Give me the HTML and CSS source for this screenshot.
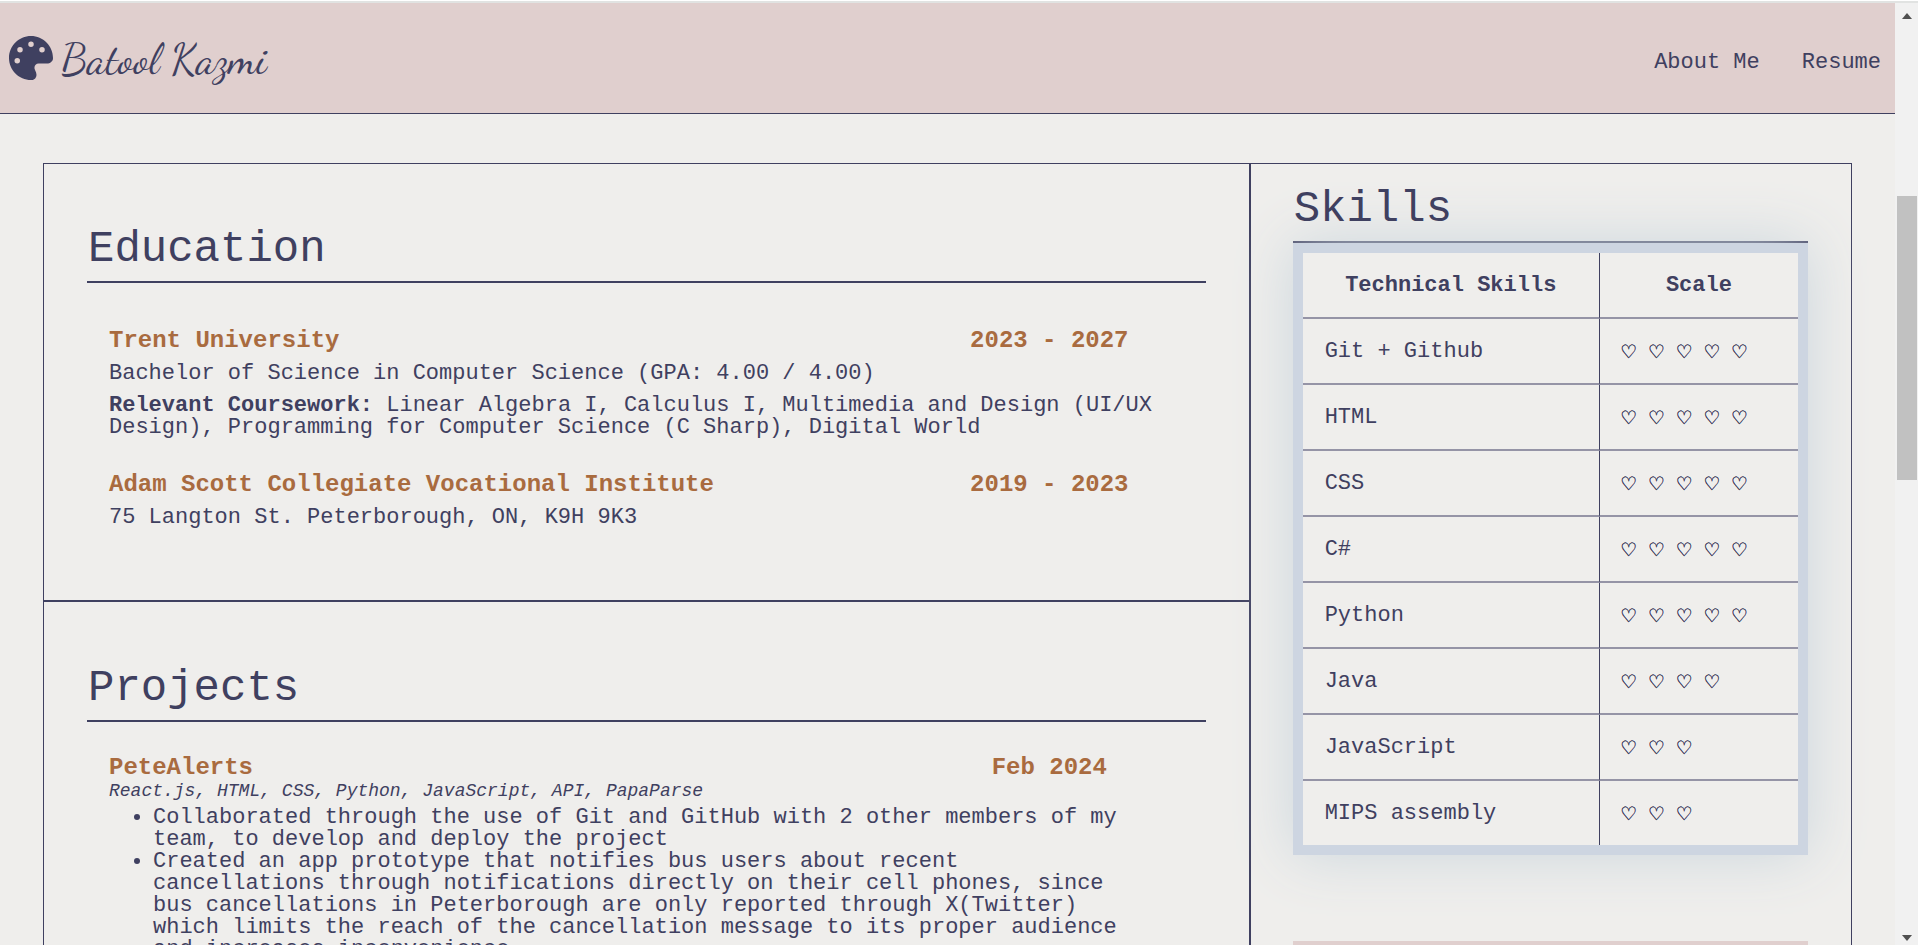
FILE: index.html
```html
<!DOCTYPE html>
<html lang="en">
<head>
<meta charset="utf-8">
<title>Batool Kazmi</title>
<link rel="stylesheet" href="styles.css">
</head>
<body>
<div class="window">
  <div class="page">
    <header class="site-header">
      <a class="brand" href="#">
        <svg class="brand-icon" viewBox="0 0 512 512" aria-hidden="true"><path d="M512 256c0 .9 0 1.800 0 2.700c-.4 36.500-33.600 61.300-70.100 61.300H344c-26.500 0-48 21.500-48 48c0 3.400 .4 6.700 1 9.900c2.100 10.200 6.500 20 10.800 29.900c6.100 13.800 12.100 27.500 12.100 42c0 31.800-21.600 60.700-53.400 62c-3.500 .1-7 .2-10.600 .2C114.600 512 0 397.400 0 256S114.600 0 256 0S512 114.600 512 256zM128 288a32 32 0 1 0 -64 0 32 32 0 1 0 64 0zm0-96a32 32 0 1 0 0-64 32 32 0 1 0 0 64zM288 96a32 32 0 1 0 -64 0 32 32 0 1 0 64 0zm96 96a32 32 0 1 0 0-64 32 32 0 1 0 0 64z"/></svg>
        <span class="brand-name">Batool Kazmi</span>
      </a>
      <nav class="site-nav">
        <a href="#about">About Me</a>
        <a href="#resume">Resume</a>
      </nav>
    </header>
    <main class="resume">
      <div class="main-column">
        <section class="panel">
          <h2 class="section-title">Education</h2>
          <div class="entries education">
            <article class="entry">
              <div class="entry-head"><h3>Trent University</h3><h3 class="date">2023 - 2027</h3></div>
              <p>Bachelor of Science in Computer Science (GPA: 4.00 / 4.00)</p>
              <p><strong>Relevant Coursework:</strong> Linear Algebra I, Calculus I, Multimedia and Design (UI/UX Design), Programming for Computer Science (C Sharp), Digital World</p>
            </article>
            <article class="entry">
              <div class="entry-head"><h3>Adam Scott Collegiate Vocational Institute</h3><h3 class="date">2019 - 2023</h3></div>
              <p>75 Langton St. Peterborough, ON, K9H 9K3</p>
            </article>
          </div>
        </section>
        <section class="panel">
          <h2 class="section-title">Projects</h2>
          <div class="entries projects">
            <article class="project">
              <div class="entry-head"><h3>PeteAlerts</h3><h3 class="date">Feb 2024</h3></div>
              <p class="stack">React.js, HTML, CSS, Python, JavaScript, API, PapaParse</p>
              <ul class="points">
                <li>Collaborated through the use of Git and GitHub with 2 other members of my team, to develop and deploy the project</li>
                <li>Created an app prototype that notifies bus users about recent cancellations through notifications directly on their cell phones, since bus cancellations in Peterborough are only reported through X(Twitter) which limits the reach of the cancellation message to its proper audience and increases inconvenience</li>
              </ul>
            </article>
          </div>
        </section>
      </div>
      <aside class="side-column">
        <h2 class="section-title">Skills</h2>
        <div class="skills-frame">
          <table class="skills">
            <thead>
              <tr><th scope="col">Technical Skills</th><th scope="col">Scale</th></tr>
            </thead>
            <tbody>
              <tr><td>Git + Github</td><td class="hearts">♡ ♡ ♡ ♡ ♡</td></tr>
              <tr><td>HTML</td><td class="hearts">♡ ♡ ♡ ♡ ♡</td></tr>
              <tr><td>CSS</td><td class="hearts">♡ ♡ ♡ ♡ ♡</td></tr>
              <tr><td>C#</td><td class="hearts">♡ ♡ ♡ ♡ ♡</td></tr>
              <tr><td>Python</td><td class="hearts">♡ ♡ ♡ ♡ ♡</td></tr>
              <tr><td>Java</td><td class="hearts">♡ ♡ ♡ ♡</td></tr>
              <tr><td>JavaScript</td><td class="hearts">♡ ♡ ♡</td></tr>
              <tr><td>MIPS assembly</td><td class="hearts">♡ ♡ ♡</td></tr>
            </tbody>
          </table>
        </div>
        <div class="side-card"></div>
      </aside>
    </main>
  </div>
  <div class="scrollbar" aria-hidden="true">
    <svg class="arrow" viewBox="0 0 10 6"><path d="M0 6L5 0L10 6Z"/></svg>
    <div class="track"><div class="thumb"></div></div>
    <svg class="arrow" viewBox="0 0 10 6"><path d="M0 0L5 6L10 0Z"/></svg>
  </div>
</div>
</body>
</html>
```

FILE: styles.css
```css
:root {
  --ink: #3f4060;
  --paper: #efeeec;
  --rose: #e0cfce;
  --mist: #cdd5e1;
  --copper: #a96b3f;
}

* {
  box-sizing: border-box;
  margin: 0;
  padding: 0;
}

body {
  height: 100vh;
  overflow: hidden;
  background: var(--paper);
  color: var(--ink);
  font: 22px/22px "Liberation Mono", "DejaVu Sans Mono", monospace;
}

.window {
  display: flex;
  height: 100vh;
  border-top: 1px solid #fff;
}

.window::before {
  content: "";
  position: absolute;
  top: 1px;
  left: 0;
  right: 0;
  height: 2px;
  background: #e1e3e2;
}

.page {
  flex: 1;
  min-width: 0;
  padding-top: 2px;
  overflow: hidden;
}

.site-header {
  display: flex;
  align-items: center;
  justify-content: space-between;
  padding: 32px 14px 32px 9px;
  background: var(--rose);
  border-bottom: 1px solid var(--ink);
}

.brand {
  display: flex;
  align-items: center;
  gap: 8px;
  color: inherit;
  text-decoration: none;
}

.brand-icon {
  width: 44px;
  height: 44px;
  fill: var(--ink);
}

.brand-name {
  padding-top: 2px;
  font: 43px/44px "Dancing Script", "Liberation Serif", cursive;
}

.site-nav {
  display: flex;
  gap: 42px;
  padding-top: 10px;
}

.site-nav a {
  color: inherit;
  text-decoration: none;
}

.resume {
  display: grid;
  grid-template-columns: 2fr 1fr;
  margin: 49px 43px;
  border: 1px solid var(--ink);
}

.main-column {
  min-width: 0;
}

.panel {
  padding: 63px 43px 71px;
}

.panel + .panel {
  padding-top: 64px;
  border-top: 2px solid var(--ink);
}

.section-title {
  padding: 0 1px 10px;
  border-bottom: 2px solid var(--ink);
  font-size: 44px;
  font-weight: 400;
  line-height: 44px;
}

.entries {
  padding: 0 22px;
}

.education {
  display: grid;
  gap: 34px;
  padding-top: 46px;
}

.projects {
  padding-top: 34px;
}

.entry {
  display: grid;
  gap: 10px;
}

.entry-head {
  display: grid;
  grid-template-columns: 3fr 1fr;
  color: var(--copper);
}

.entry-head h3 {
  font-size: 24px;
  line-height: 24px;
}

.entry-head .date {
  text-align: center;
}

.stack {
  padding: 2px 0 7px;
  font-size: 18px;
  font-style: italic;
  line-height: 18px;
}

.points {
  padding: 0 44px;
}

.side-column {
  min-width: 0;
  padding: 23px 43px 44px 42px;
  border-left: 2px solid var(--ink);
}

.skills-frame {
  border: 10px solid var(--mist);
  box-shadow: 0 0 56px #cbd6dd;
}

.skills {
  width: 100%;
  border-spacing: 0;
  table-layout: fixed;
}

.skills th,
.skills td {
  padding: 22px 22px 20px;
  border-bottom: 2px solid #9594a6;
  text-align: left;
}

.skills th {
  text-align: center;
}

.skills th:first-child,
.skills td:first-child {
  width: 60%;
  border-right: 1px solid var(--ink);
}

.skills tbody tr:last-child td {
  border-bottom: 0;
}

.skills .hearts {
  font-family: "DejaVu Sans Mono", monospace;
  font-size: 23px;
  text-shadow: 0 0 0 var(--ink), 0 0 0 var(--ink);
}

.side-card {
  height: 160px;
  margin-top: 86px;
  background: var(--rose);
}

.scrollbar {
  display: flex;
  flex-direction: column;
  align-items: center;
  width: 23px;
  padding: 12px 0 4px;
  background: #f1f1f1;
}

.arrow {
  width: 10px;
  height: 6px;
  fill: #505050;
}

.track {
  flex: 1;
  align-self: stretch;
  padding: 177px 1px 0 2px;
}

.thumb {
  height: 284px;
  background: #c1c1c1;
}
```
